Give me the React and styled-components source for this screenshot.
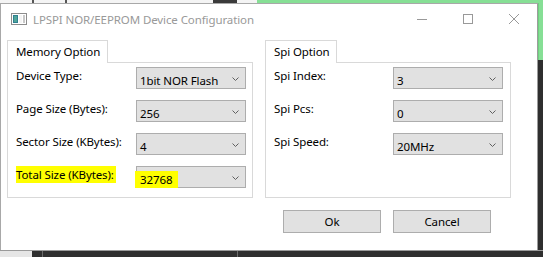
import React from "react";
import styled, { createGlobalStyle } from "styled-components";

const GlobalStyle = createGlobalStyle`
  html, body { margin: 0; padding: 0; }
  body {
    width: 543px;
    height: 257px;
    overflow: hidden;
    background: #ffffff;
    font-family: "Noto Sans", "Segoe UI", "Liberation Sans", sans-serif;
    font-size: 11.5px;
    letter-spacing: -0.1px;
    color: #000;
  }
`;

const Screen = styled.div`
  display: grid;
  grid-template-columns: 538px 5px;
  grid-template-rows: 3px 247px 7px;
  width: 543px;
  height: 257px;
`;

const TopStrip = styled.div`
  grid-column: 1 / -1;
  display: flex;
`;

const Seg = styled.div`
  width: ${(p) => p.$w}px;
  flex: ${(p) => (p.$grow ? 1 : "none")};
  background: ${(p) => p.$c};
`;

const SideStrip = styled.div`
  display: flex;
  flex-direction: column;
  background: #2f2f2f;
`;

const SideGreen = styled.div`
  height: 57px;
  background: #86df95;
  border-left: 1px solid #6fd07f;
`;

const BottomStrip = styled.div`
  grid-column: 1 / -1;
  display: flex;
  border-top: 1px solid #9a9a9a;
`;

const Window = styled.div`
  border: 1px solid #a8a8a8;
  border-right-color: #9c9c9c;
  border-bottom: none;
  background: #ffffff;
  display: flex;
  flex-direction: column;
`;

const TitleBar = styled.div`
  height: 30px;
  display: flex;
  align-items: center;
  padding-left: 10px;
`;

const AppIcon = styled.svg`
  width: 16px;
  height: 12px;
  flex: none;
`;

const Title = styled.div`
  margin-left: 6px;
  color: #999999;
  flex: 1;
  white-space: nowrap;
`;

const Controls = styled.div`
  display: flex;
  height: 30px;
`;

const CtrlButton = styled.div`
  width: 46px;
  height: 30px;
  display: flex;
  align-items: center;
  justify-content: center;
`;

const Body = styled.div`
  padding: 6px 0 0 6px;
  display: flex;
  flex-direction: column;
`;

const Panels = styled.div`
  display: flex;
  gap: 12px;
`;

const Group = styled.div`
  width: 246px;
  display: flex;
  flex-direction: column;
  align-items: flex-start;
`;

const Tab = styled.div`
  position: relative;
  z-index: 1;
  width: ${(p) => p.$w}px;
  height: 23px;
  box-sizing: border-box;
  border: 1px solid #d9d9d9;
  border-bottom: none;
  background: #ffffff;
  margin-bottom: -1px;
  padding: 3px 0 0 8px;
  line-height: 16px;
  white-space: nowrap;
`;

const Pane = styled.div`
  width: 246px;
  height: 136px;
  box-sizing: border-box;
  border: 1px solid #d9d9d9;
  padding: 4px 0 0 8px;
  display: flex;
  flex-direction: column;
  gap: 11px;
`;

const Row = styled.div`
  display: grid;
  grid-template-columns: ${(p) => p.$label}px 110px;
  align-items: start;
`;

const Label = styled.div`
  justify-self: start;
  line-height: 17px;
  white-space: nowrap;
  background: ${(p) => (p.$mark ? "#ffff00" : "transparent")};
  padding-right: ${(p) => (p.$mark ? "2px" : "0")};
`;

const Combo = styled.div`
  height: 22px;
  box-sizing: border-box;
  border: 1px solid #adadad;
  background: #e1e1e1;
  display: flex;
  align-items: center;
  padding: 0 6px 0 3px;
`;

const ComboText = styled.span`
  flex: 1;
  white-space: nowrap;
  line-height: 17px;
  margin-top: 4px;
`;

const Marked = styled.span`
  background: #ffff00;
  margin-left: -5px;
  padding: 0 6px 0 5px;
  display: inline-block;
  line-height: 17px;
`;

const Chevron = styled.svg`
  width: 7px;
  height: 4px;
  flex: none;
  margin-top: 1px;
`;

const Buttons = styled.div`
  display: flex;
  justify-content: flex-end;
  gap: 12px;
  margin-top: 12px;
  padding-right: 46px;
`;

const Button = styled.div`
  width: 98px;
  height: 23px;
  box-sizing: border-box;
  border: 1px solid #adadad;
  background: #e1e1e1;
  display: flex;
  align-items: center;
  justify-content: center;
`;

const ChevronIcon = () => (
  <Chevron viewBox="0 0 7 4">
    <path d="M0.5 0.5 L3.5 3.5 L6.5 0.5" fill="none" stroke="#606060" strokeWidth="1" />
  </Chevron>
);

const Field = ({ label, value, labelWidth, mark }) => (
  <Row $label={labelWidth}>
    <Label $mark={mark}>{label}</Label>
    <Combo>
      <ComboText>{mark ? <Marked>{value}</Marked> : value}</ComboText>
      <ChevronIcon />
    </Combo>
  </Row>
);

export default function App() {
  return (
    <>
      <GlobalStyle />
      <Screen>
        <TopStrip>
          <Seg $w={32} $c="#f4f4f4" />
          <Seg $w={2} $c="#555" />
          <Seg $w={31} $c="#f4f4f4" />
          <Seg $w={2} $c="#555" />
          <Seg $w={146} $c="#f4f4f4" />
          <Seg $w={24} $c="#3a3a3a" />
          <Seg $w={20} $c="#f4f4f4" />
          <Seg $grow $c="#86df95" />
        </TopStrip>
        <Window>
          <TitleBar>
            <AppIcon viewBox="0 0 16 12">
              <rect x="0.5" y="0.5" width="15" height="11" fill="#ffffff" stroke="#8c8c8c" />
              <rect x="2" y="2" width="5" height="8" fill="#2f7f8f" />
              <rect x="3" y="3" width="3" height="6" fill="#4fa59a" />
              <rect x="8" y="2" width="3" height="8" fill="#f4f4f4" />
              <rect x="12" y="2" width="2" height="8" fill="#c8c8c8" />
            </AppIcon>
            <Title>LPSPI NOR/EEPROM Device Configuration</Title>
            <Controls>
              <CtrlButton>
                <svg width="10" height="10" viewBox="0 0 10 10">
                  <path d="M0 5.5 H10" stroke="#999" strokeWidth="1" />
                </svg>
              </CtrlButton>
              <CtrlButton>
                <svg width="10" height="10" viewBox="0 0 10 10">
                  <rect x="0.5" y="0.5" width="9" height="9" fill="none" stroke="#999" strokeWidth="1" />
                </svg>
              </CtrlButton>
              <CtrlButton>
                <svg width="10" height="10" viewBox="0 0 10 10">
                  <path d="M0 0 L10 10 M10 0 L0 10" stroke="#999" strokeWidth="1" />
                </svg>
              </CtrlButton>
            </Controls>
          </TitleBar>
          <Body>
            <Panels>
              <Group>
                <Tab $w={101}>Memory Option</Tab>
                <Pane>
                  <Field labelWidth={120} label="Device Type:" value="1bit NOR Flash" />
                  <Field labelWidth={120} label="Page Size (Bytes):" value="256" />
                  <Field labelWidth={120} label="Sector Size (KBytes):" value="4" />
                  <Field labelWidth={120} label="Total Size (KBytes):" value="32768" mark />
                </Pane>
              </Group>
              <Group>
                <Tab $w={72}>Spi Option</Tab>
                <Pane>
                  <Field labelWidth={119} label="Spi Index:" value="3" />
                  <Field labelWidth={119} label="Spi Pcs:" value="0" />
                  <Field labelWidth={119} label="Spi Speed:" value="20MHz" />
                </Pane>
              </Group>
            </Panels>
            <Buttons>
              <Button>Ok</Button>
              <Button>Cancel</Button>
            </Buttons>
          </Body>
        </Window>
        <SideStrip>
          <SideGreen />
        </SideStrip>
        <BottomStrip>
          <Seg $w={32} $c="#e6e6e6" />
          <Seg $w={10} $c="#2f2f2f" />
          <Seg $w={1} $c="#6a6a6a" />
          <Seg $w={194} $c="#2f2f2f" />
          <Seg $w={1} $c="#6a6a6a" />
          <Seg $grow $c="#2f2f2f" />
        </BottomStrip>
      </Screen>
    </>
  );
}
